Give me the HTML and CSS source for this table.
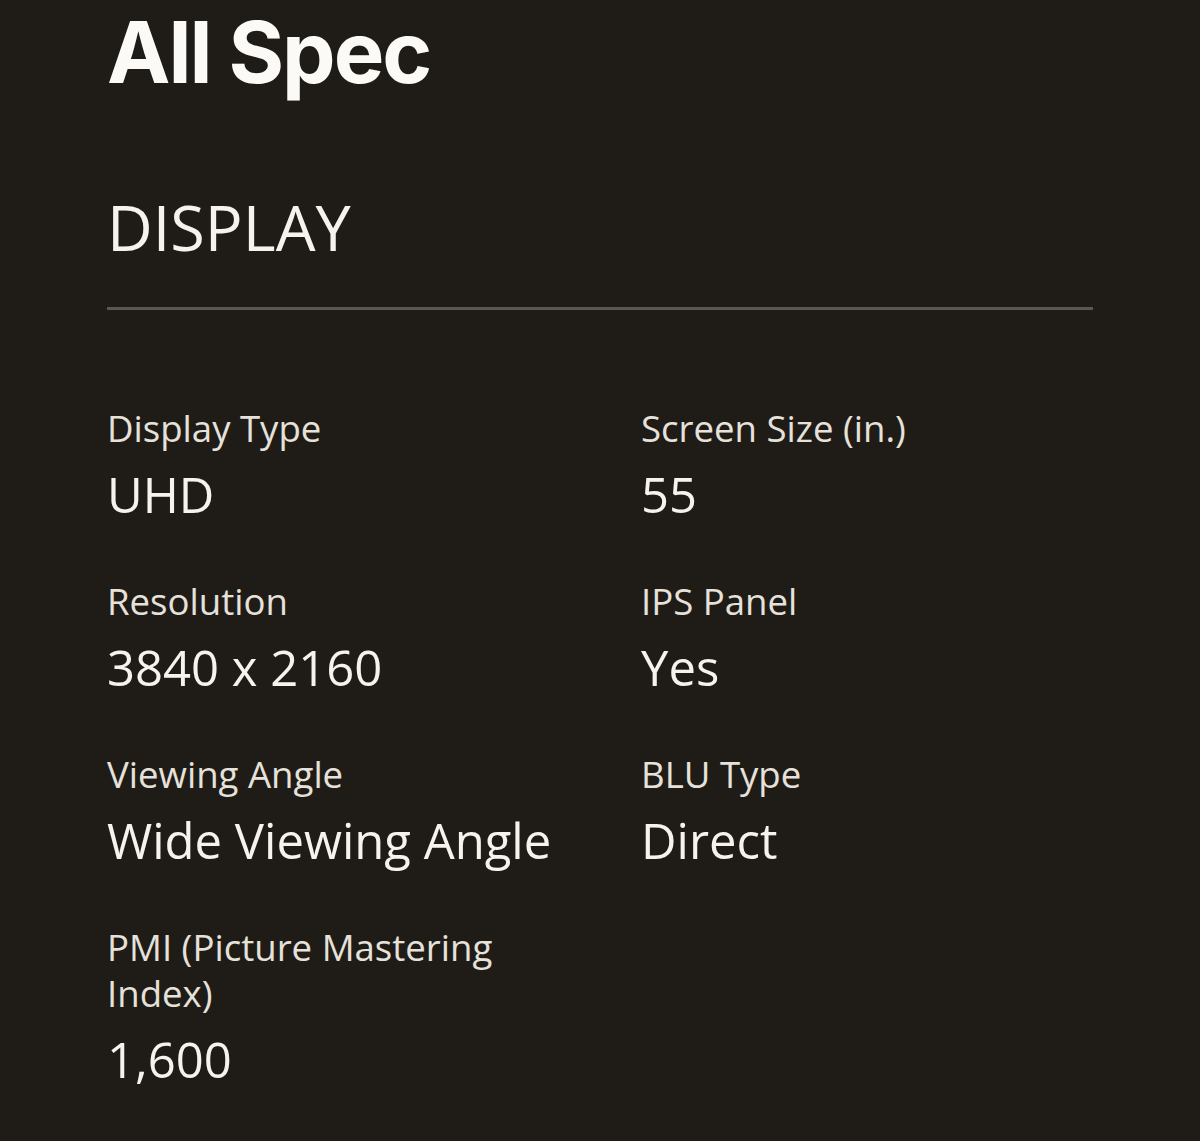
FILE: index.html
```html
<!DOCTYPE html>
<html lang="en">
<head>
<meta charset="utf-8">
<title>All Spec</title>
<link rel="stylesheet" href="styles.css">
</head>
<body>
<main class="page">
  <h1 class="title">All Spec</h1>
  <section class="section">
    <h2 class="section-title">DISPLAY</h2>
    <div class="divider"></div>
    <dl class="spec-grid">
      <div class="spec">
        <dt class="spec-label">Display Type</dt>
        <dd class="spec-value">UHD</dd>
      </div>
      <div class="spec">
        <dt class="spec-label">Screen Size (in.)</dt>
        <dd class="spec-value">55</dd>
      </div>
      <div class="spec">
        <dt class="spec-label">Resolution</dt>
        <dd class="spec-value">3840 x 2160</dd>
      </div>
      <div class="spec">
        <dt class="spec-label">IPS Panel</dt>
        <dd class="spec-value">Yes</dd>
      </div>
      <div class="spec">
        <dt class="spec-label">Viewing Angle</dt>
        <dd class="spec-value">Wide Viewing Angle</dd>
      </div>
      <div class="spec">
        <dt class="spec-label">BLU Type</dt>
        <dd class="spec-value">Direct</dd>
      </div>
      <div class="spec">
        <dt class="spec-label">PMI (Picture Mastering Index)</dt>
        <dd class="spec-value">1,600</dd>
      </div>
    </dl>
  </section>
</main>
</body>
</html>
```
FILE: styles.css
```css
html, body {
  margin: 0;
  padding: 0;
  background: #1f1c17;
}
body {
  color: #f3f0ea;
  font-family: "Open Sans", "Noto Sans", sans-serif;
}
.page {
  padding: 0 107px 0 107px;
}
.title {
  margin: 0;
  padding-top: 5px;
  font-family: Inter, "Liberation Sans", sans-serif;
  font-weight: 700;
  font-size: 85px;
  letter-spacing: -0.024em;
  line-height: 96px;
  color: #fbfaf6;
}
.section {
  margin-top: 86px;
}
.section-title {
  margin: 0;
  font-weight: 400;
  font-size: 63px;
  line-height: 80px;
  color: #f6f3ee;
}
.divider {
  margin-top: 40px;
  height: 3px;
  background: #5a5650;
}
.spec-grid {
  margin: 95px 0 0 0;
  display: grid;
  grid-template-columns: 534px 1fr;
  row-gap: 53px;
}
.spec {
  margin: 0;
}
.spec-label {
  font-size: 36.6px;
  line-height: 46px;
  color: #e6e2db;
  max-width: 420px;
}
.spec-value {
  margin: 12px 0 0 0;
  font-size: 49px;
  line-height: 62px;
  color: #f6f3ee;
}
```
